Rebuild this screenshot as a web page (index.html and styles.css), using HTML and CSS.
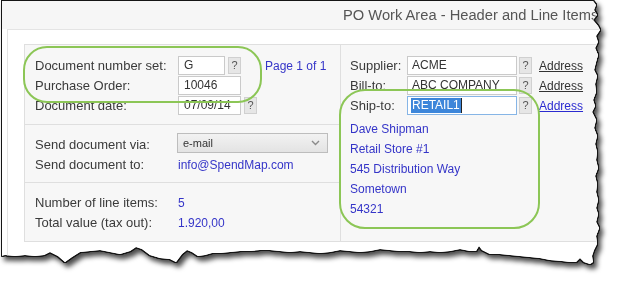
FILE: index.html
```html
<!DOCTYPE html>
<html lang="en">
<head>
    <meta charset="UTF-8">
    <title>PO Work Area</title>
    <link rel="stylesheet" href="styles.css">
</head>
<body>

<div class="frame">
    <div class="paper">
        <div class="titlebar">PO Work Area - Header and Line Items</div>

        <div class="workarea">
            <div class="panel">

                <!-- Left column: document, delivery, totals -->
                <div class="col-left">
                    <div class="section section-doc">
                        <div class="row">
                            <span class="label">Document number set:</span>
                            <span class="field w-set">G</span>
                            <span class="lookup">?</span>
                            <span class="value page">Page 1 of 1</span>
                        </div>
                        <div class="row">
                            <span class="label">Purchase Order:</span>
                            <span class="field w-num">10046</span>
                        </div>
                        <div class="row">
                            <span class="label">Document date:</span>
                            <span class="field w-num">07/09/14</span>
                            <span class="lookup">?</span>
                        </div>
                    </div>

                    <div class="section section-send">
                        <div class="row">
                            <span class="label">Send document via:</span>
                            <div class="select">
                                <span>e-mail</span>
                                <svg width="9" height="6" viewBox="0 0 9 6"><path d="M1 1 L4.5 4.5 L8 1" fill="none" stroke="#8a8a8a" stroke-width="1.4"/></svg>
                            </div>
                        </div>
                        <div class="row">
                            <span class="label">Send document to:</span>
                            <span class="value">info@SpendMap.com</span>
                        </div>
                    </div>

                    <div class="section section-total">
                        <div class="row">
                            <span class="label">Number of line items:</span>
                            <span class="value">5</span>
                        </div>
                        <div class="row">
                            <span class="label">Total value (tax out):</span>
                            <span class="value">1.920,00</span>
                        </div>
                    </div>
                </div>

                <!-- Right column: parties -->
                <div class="col-right">
                    <div class="row">
                        <span class="label label-r">Supplier:</span>
                        <span class="field w-party">ACME</span>
                        <span class="lookup lookup-r">?</span>
                        <a class="address">Address</a>
                    </div>
                    <div class="row">
                        <span class="label label-r">Bill-to:</span>
                        <span class="field w-party">ABC COMPANY</span>
                        <span class="lookup lookup-r">?</span>
                        <a class="address">Address</a>
                    </div>
                    <div class="row">
                        <span class="label label-r">Ship-to:</span>
                        <span class="field w-party focused"><span class="selected">RETAIL1</span></span>
                        <span class="lookup lookup-r">?</span>
                        <a class="address active">Address</a>
                    </div>

                    <div class="ship-address">
                        <div>Dave Shipman</div>
                        <div>Retail Store #1</div>
                        <div>545 Distribution Way</div>
                        <div>Sometown</div>
                        <div>54321</div>
                    </div>
                </div>

            </div>
        </div>

        <!-- Annotation rings drawn over the form -->
        <div class="mark mark-doc"></div>
        <div class="mark mark-ship"></div>
    </div>
</div>

</body>
</html>
```

FILE: styles.css
```css
body {
    margin: 0;
    background-color: #fff;
    font-family: "Liberation Sans", Arial, sans-serif;
    color: #3a3a3a;
}

/* torn paper edge + outline + shadow */
.frame {
    width: 620px;
    height: 281px;
    filter: drop-shadow(-1px 0 0 #151515) drop-shadow(0 -1px 0 #151515)
            drop-shadow(1px 0 0 #151515) drop-shadow(0 1px 0 #151515)
            drop-shadow(3px 4px 2.5px rgba(0, 0, 0, 0.7));
}

.paper {
    position: relative;
    width: 620px;
    height: 281px;
    box-sizing: border-box;
    padding: 1px 0 0 2px;
    overflow: hidden;
    background-color: #fff;
    clip-path: polygon(
        2px 1px, 593px 1px,
        596px 5px, 594px 10px, 597px 15px, 593px 20px, 598px 26px, 600px 30px,
        596px 36px, 598px 42px, 595px 48px, 598px 55px, 596px 62px, 594px 70px,
        597px 76px, 595px 84px, 596px 92px, 593px 100px, 595px 106px, 592px 112px,
        596px 120px, 594px 128px, 597px 136px, 595px 144px, 597px 152px, 596px 160px,
        598px 168px, 595px 176px, 597px 184px, 596px 192px, 598px 200px, 596px 208px,
        598px 214px, 596px 222px, 599px 228px, 596px 236px, 597px 244px, 594px 250px,
        592px 256px, 593px 262px,
        590px 264px, 584px 262px, 580px 258px, 576px 262px, 570px 262px, 562px 261px,
        550px 260px, 540px 258px, 530px 257px, 520px 256px, 510px 255px, 500px 254px,
        490px 254px, 482px 250px, 479px 246px, 476px 251px, 470px 251px, 460px 249px,
        450px 251px, 440px 252px, 430px 251px, 420px 252px, 410px 251px, 400px 251px,
        390px 250px, 380px 249px, 370px 251px, 360px 252px, 350px 251px, 340px 250px,
        330px 252px, 320px 253px, 310px 252px, 300px 251px, 290px 252px, 280px 251px,
        270px 250px, 260px 250px, 250px 251px, 240px 251px, 230px 252px, 220px 253px,
        212px 253px, 205px 255px, 198px 256px, 192px 252px, 187px 250px, 182px 254px,
        176px 262px, 170px 259px, 160px 258px, 150px 255px, 142px 249px, 136px 247px,
        130px 251px, 120px 254px, 110px 252px, 100px 250px, 90px 251px, 80px 252px,
        72px 257px, 65px 262px, 58px 256px, 50px 252px, 44px 255px, 35px 256px,
        25px 255px, 15px 256px, 5px 255px, 2px 256px
    );
}

.titlebar {
    height: 28px;
    line-height: 28px;
    padding-left: 341px;
    background-color: #f6f6f6;
    color: #555;
    font-size: 14.7px;
    white-space: nowrap;
}

.workarea {
    margin-left: 5px;
    border-top: 1px solid #e4e4e4;
    border-left: 1px solid #e4e4e4;
    padding: 14px 0 0 16px;
    background-color: #fff;
    height: 260px;
}

.panel {
    display: flex;
    border: 1px solid #dfdfdf;
    background-color: #f7f7f7;
}

.col-left {
    width: 316px;
    flex: none;
    box-sizing: border-box;
    border-right: 1px solid #dfdfdf;
}

.col-right {
    flex: 1;
    padding: 11px 0 0 9px;
}

.section {
    padding: 10px 0 8px 10px;
    border-bottom: 1px solid #dfdfdf;
}

.section-doc {
    padding-top: 11px;
}

.section-send {
    padding-bottom: 7px;
}

.section-total {
    border-bottom: none;
}

.row {
    display: flex;
    align-items: flex-start;
    height: 20px;
    line-height: 20px;
    font-size: 13px;
    white-space: nowrap;
}

.label {
    width: 143px;
    flex: none;
}

.label-r {
    width: 57px;
}

.field {
    height: 19px;
    box-sizing: border-box;
    border: 1px solid #cacaca;
    background-color: #fff;
    padding: 0 4px;
    font-size: 12px;
    line-height: 17px;
    color: #333;
}

.w-set {
    width: 47px;
    padding-left: 5px;
}

.w-num {
    width: 63px;
    padding-left: 5px;
}

.w-party {
    width: 110px;
}

.focused {
    border-color: #86b5e6;
    padding-left: 3px;
}

.selected {
    display: inline-block;
    line-height: 15px;
    margin-top: 1px;
    padding: 0 1px;
    background-color: #3d86da;
    color: #fff;
    border-right: 1px solid #222;
}

.lookup {
    width: 13px;
    height: 17px;
    margin: 1px 0 0 3px;
    box-sizing: border-box;
    border: 1px solid #d0d0d0;
    background-color: #e6e6e6;
    color: #555;
    font-size: 11px;
    line-height: 15px;
    text-align: center;
}

.lookup-r {
    margin-left: 2px;
}

.value {
    color: #3535c8;
    font-size: 12px;
}

.page {
    margin-left: 24px;
}

.address {
    margin-left: 7px;
    font-size: 12px;
    color: #333;
    text-decoration: underline;
}

.address.active {
    color: #2b2bd0;
}

.select {
    display: flex;
    align-items: center;
    justify-content: space-between;
    width: 151px;
    height: 20px;
    margin: -2px 0 0 -1px;
    box-sizing: border-box;
    padding: 0 7px 0 5px;
    border: 1px solid #bdbdbd;
    background: linear-gradient(#f2f2f2, #e3e3e3);
    font-size: 11px;
    color: #333;
}

.ship-address {
    margin-top: 3px;
    font-size: 12px;
    line-height: 20px;
    color: #3535c8;
}

/* green annotation rings */
.mark {
    position: absolute;
    box-sizing: border-box;
    border: 2px solid #8cc656;
}

.mark-doc {
    left: 23px;
    top: 46px;
    width: 239px;
    height: 57px;
    border-radius: 24px;
}

.mark-ship {
    left: 339px;
    top: 89px;
    width: 201px;
    height: 140px;
    border-radius: 26px;
}
```
